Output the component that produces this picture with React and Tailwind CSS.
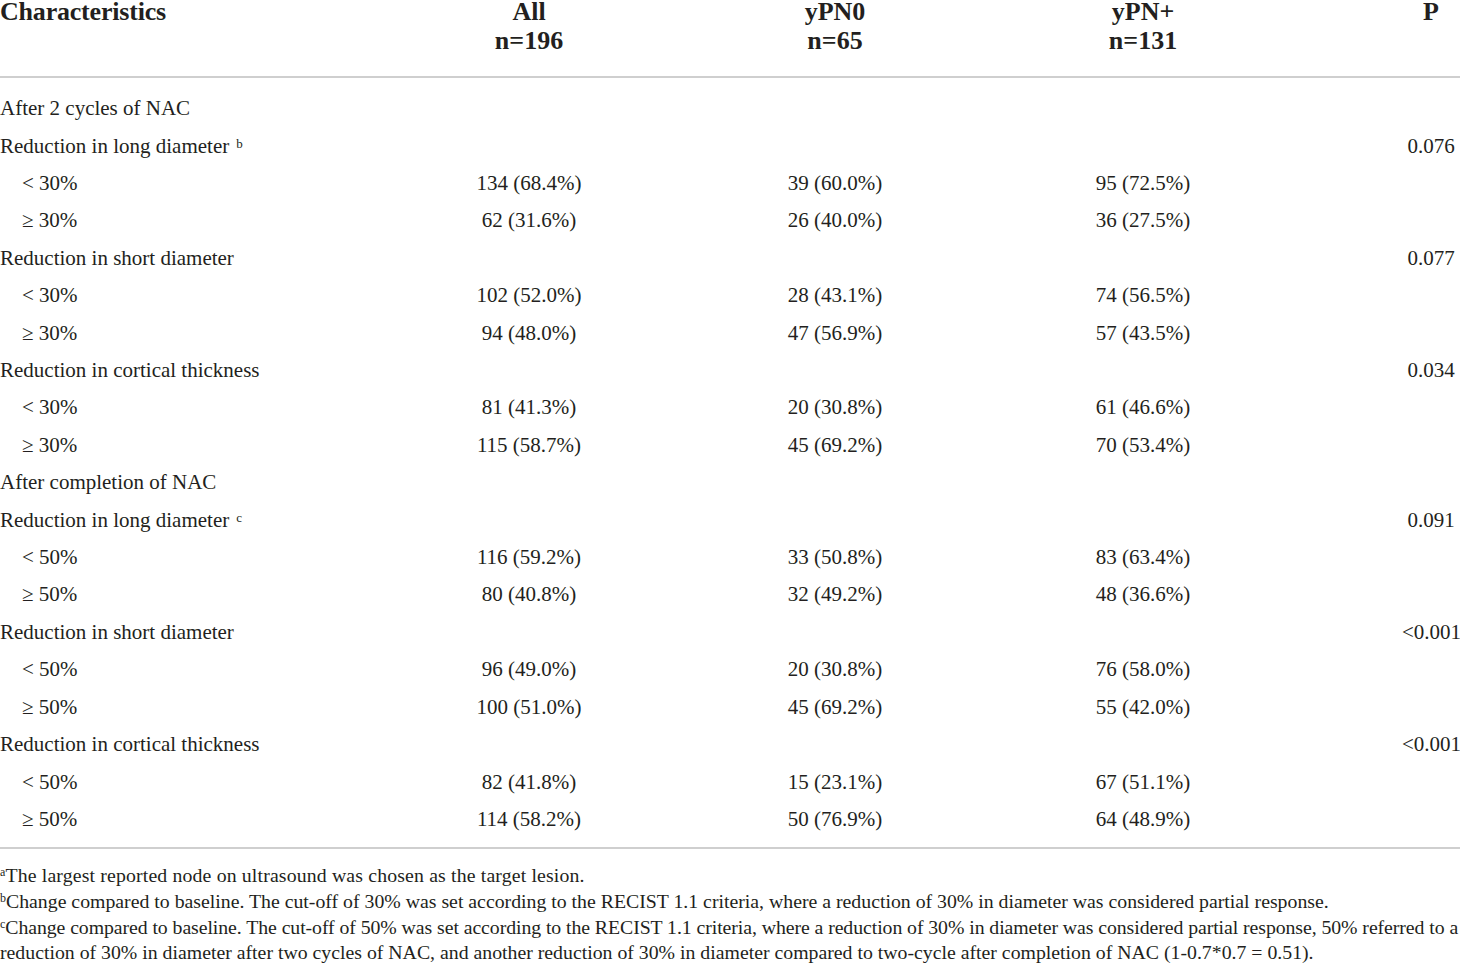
import React from "react";

const rows = [
  { label: "After 2 cycles of NAC", type: "section" },
  { label: "Reduction in long diameter", sup: "b", p: "0.076" },
  { label: "< 30%", sub: true, a: "134 (68.4%)", b: "39 (60.0%)", c: "95 (72.5%)" },
  { label: "≥ 30%", sub: true, a: "62 (31.6%)", b: "26 (40.0%)", c: "36 (27.5%)" },
  { label: "Reduction in short diameter", p: "0.077" },
  { label: "< 30%", sub: true, a: "102 (52.0%)", b: "28 (43.1%)", c: "74 (56.5%)" },
  { label: "≥ 30%", sub: true, a: "94 (48.0%)", b: "47 (56.9%)", c: "57 (43.5%)" },
  { label: "Reduction in cortical thickness", p: "0.034" },
  { label: "< 30%", sub: true, a: "81 (41.3%)", b: "20 (30.8%)", c: "61 (46.6%)" },
  { label: "≥ 30%", sub: true, a: "115 (58.7%)", b: "45 (69.2%)", c: "70 (53.4%)" },
  { label: "After completion of NAC", type: "section" },
  { label: "Reduction in long diameter", sup: "c", p: "0.091" },
  { label: "< 50%", sub: true, a: "116 (59.2%)", b: "33 (50.8%)", c: "83 (63.4%)" },
  { label: "≥ 50%", sub: true, a: "80 (40.8%)", b: "32 (49.2%)", c: "48 (36.6%)" },
  { label: "Reduction in short diameter", p: "<0.001" },
  { label: "< 50%", sub: true, a: "96 (49.0%)", b: "20 (30.8%)", c: "76 (58.0%)" },
  { label: "≥ 50%", sub: true, a: "100 (51.0%)", b: "45 (69.2%)", c: "55 (42.0%)" },
  { label: "Reduction in cortical thickness", p: "<0.001" },
  { label: "< 50%", sub: true, a: "82 (41.8%)", b: "15 (23.1%)", c: "67 (51.1%)" },
  { label: "≥ 50%", sub: true, a: "114 (58.2%)", b: "50 (76.9%)", c: "64 (48.9%)" },
];

const grid = "grid grid-cols-[376px_306px_306px_310px_104px_58px]";

function Head({ top, bottom, left }) {
  return (
    <div className={left ? "text-left" : "text-center"}>
      <div className="leading-[24px] h-[24px]">{top}</div>
      {bottom && <div className="leading-[24px] h-[24px] mt-[5px]">{bottom}</div>}
    </div>
  );
}

export default function App() {
  return (
    <div
      className="w-[1460px] h-[964px] bg-white text-[#231f20] overflow-hidden"
      style={{ fontFamily: '"Liberation Serif", "Times New Roman", serif' }}
    >
      {/* header */}
      <div className={`${grid} h-[76px] text-[26px] font-bold`}>
        <div className="tracking-[-0.2px]"><Head left top="Characteristics" /></div>
        <Head top="All" bottom="n=196" />
        <Head top="yPN0" bottom="n=65" />
        <Head top="yPN+" bottom="n=131" />
        <div></div>
        <Head top="P" />
      </div>
      <div className="h-[2px] bg-[#cfcfcf]"></div>
      <div className="pt-[12px] pb-[9px] text-[21px]">
        {rows.map((r, i) => (
          <div key={i} className={`${grid} h-[37.42px] items-center leading-none`}>
            <div className={r.sub ? "pl-[22px]" : ""}>
              {r.label}
              {r.sup && <sup className="text-[13px] ml-[7px] relative -top-[5px]">{r.sup}</sup>}
            </div>
            <div className="text-center">{r.a}</div>
            <div className="text-center">{r.b}</div>
            <div className="text-center">{r.c}</div>
            <div></div>
            <div className="text-center whitespace-nowrap">{r.p}</div>
          </div>
        ))}
      </div>
      <div className="h-[2px] bg-[#cfcfcf]"></div>
      <div className="pt-[14px] text-[19.8px] leading-[25.7px] whitespace-nowrap">
        <p className="tracking-[0.15px]"><sup className="text-[12px]">a</sup>The largest reported node on ultrasound was chosen as the target lesion.</p>
        <p><sup className="text-[12px]">b</sup>Change compared to baseline. The cut-off of 30% was set according to the RECIST 1.1 criteria, where a reduction of 30% in diameter was considered partial response.</p>
        <p className="tracking-[-0.07px]"><sup className="text-[12px]">c</sup>Change compared to baseline. The cut-off of 50% was set according to the RECIST 1.1 criteria, where a reduction of 30% in diameter was considered partial response, 50% referred to a</p>
        <p>reduction of 30% in diameter after two cycles of NAC, and another reduction of 30% in diameter compared to two-cycle after completion of NAC (1-0.7*0.7 = 0.51).</p>
      </div>
    </div>
  );
}
